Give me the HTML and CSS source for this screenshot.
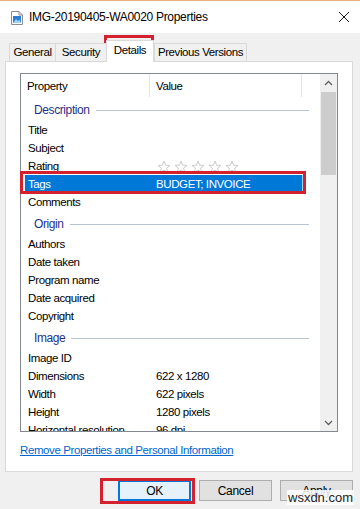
FILE: index.html
```html
<!DOCTYPE html>
<html lang="en">
<head>
    <meta charset="UTF-8">
    <meta name="viewport" content="width=device-width, initial-scale=1.0">
    <title>IMG-20190405-WA0020 Properties</title>
    <link rel="stylesheet" href="styles.css">
</head>
<body>
    <div class="window">
        <div class="titlebar">
            <svg class="file-icon" width="12" height="14" viewBox="0 0 12 14">
                <path d="M0.5 0.5 H8 L11.5 4 V13.5 H0.5 Z" fill="#fff" stroke="#8c8c8c"/>
                <path d="M8 0.5 V4 H11.5" fill="none" stroke="#8c8c8c"/>
                <rect x="2" y="5" width="8" height="7" fill="#2b7cd3"/>
                <path d="M2 12 L5 8 L7 10 L8.5 8.5 L10 12 Z" fill="#9fd0f5"/>
            </svg>
            <span class="title">IMG-20190405-WA0020 Properties</span>
            <svg class="close" width="12" height="12" viewBox="0 0 12 12">
                <path d="M1 1 L11 11 M11 1 L1 11" stroke="#1a1a1a" stroke-width="1"/>
            </svg>
        </div>

        <div class="tabs">
            <div class="tab tab-general">General</div>
            <div class="tab tab-security">Security</div>
            <div class="tab tab-details active">Details</div>
            <div class="tab tab-prev">Previous Versions</div>
        </div>

        <div class="panel">
            <div class="list">
                <div class="list-body">
                    <div class="header-row">
                        <span class="hcol hcol-prop">Property</span>
                        <span class="hcol hcol-val">Value</span>
                        <span class="hcol hcol-rest"></span>
                    </div>

                    <div class="group"><span>Description</span></div>
                    <div class="row"><span>Title</span><span></span></div>
                    <div class="row"><span>Subject</span><span></span></div>
                    <div class="row">
                        <span>Rating</span>
                        <span class="stars">
                            <svg width="14" height="14" viewBox="0 0 14 14"><path d="M7 1 L8.6 5.2 L13 5.4 L9.6 8.2 L10.8 12.6 L7 10.1 L3.2 12.6 L4.4 8.2 L1 5.4 L5.4 5.2 Z" fill="none" stroke="#cbcbcb"/></svg>
                            <svg width="14" height="14" viewBox="0 0 14 14"><path d="M7 1 L8.6 5.2 L13 5.4 L9.6 8.2 L10.8 12.6 L7 10.1 L3.2 12.6 L4.4 8.2 L1 5.4 L5.4 5.2 Z" fill="none" stroke="#cbcbcb"/></svg>
                            <svg width="14" height="14" viewBox="0 0 14 14"><path d="M7 1 L8.6 5.2 L13 5.4 L9.6 8.2 L10.8 12.6 L7 10.1 L3.2 12.6 L4.4 8.2 L1 5.4 L5.4 5.2 Z" fill="none" stroke="#cbcbcb"/></svg>
                            <svg width="14" height="14" viewBox="0 0 14 14"><path d="M7 1 L8.6 5.2 L13 5.4 L9.6 8.2 L10.8 12.6 L7 10.1 L3.2 12.6 L4.4 8.2 L1 5.4 L5.4 5.2 Z" fill="none" stroke="#cbcbcb"/></svg>
                            <svg width="14" height="14" viewBox="0 0 14 14"><path d="M7 1 L8.6 5.2 L13 5.4 L9.6 8.2 L10.8 12.6 L7 10.1 L3.2 12.6 L4.4 8.2 L1 5.4 L5.4 5.2 Z" fill="none" stroke="#cbcbcb"/></svg>
                        </span>
                    </div>
                    <div class="row selected"><span>Tags</span><span>BUDGET; INVOICE</span></div>
                    <div class="row"><span>Comments</span><span></span></div>

                    <div class="group"><span>Origin</span></div>
                    <div class="row"><span>Authors</span><span></span></div>
                    <div class="row"><span>Date taken</span><span></span></div>
                    <div class="row"><span>Program name</span><span></span></div>
                    <div class="row"><span>Date acquired</span><span></span></div>
                    <div class="row"><span>Copyright</span><span></span></div>

                    <div class="group"><span>Image</span></div>
                    <div class="row"><span>Image ID</span><span></span></div>
                    <div class="row"><span>Dimensions</span><span>622 x 1280</span></div>
                    <div class="row"><span>Width</span><span>622 pixels</span></div>
                    <div class="row"><span>Height</span><span>1280 pixels</span></div>
                    <div class="row"><span>Horizontal resolution</span><span>96 dpi</span></div>
                </div>
                <div class="scrollbar">
                    <div class="arrow">
                        <svg width="9" height="6" viewBox="0 0 9 6"><path d="M1 5 L4.5 1.5 L8 5" fill="none" stroke="#606060" stroke-width="1.3"/></svg>
                    </div>
                    <div class="track">
                        <div class="thumb"></div>
                    </div>
                    <div class="arrow">
                        <svg width="9" height="6" viewBox="0 0 9 6"><path d="M1 1 L4.5 4.5 L8 1" fill="none" stroke="#606060" stroke-width="1.3"/></svg>
                    </div>
                </div>
            </div>
            <a class="remove-link" href="#">Remove Properties and Personal Information</a>
        </div>

        <div class="buttons">
            <button class="btn btn-default">OK</button>
            <button class="btn">Cancel</button>
            <button class="btn">Apply</button>
        </div>

        <!-- red annotation boxes -->
        <div class="mark mark-tab"></div>
        <div class="mark mark-tags"></div>
        <div class="mark mark-ok"></div>
        <span class="watermark">wsxdn.com</span>
    </div>
</body>
</html>
```

FILE: styles.css
```css
html, body {
    margin: 0;
    padding: 0;
}
body {
    font-family: "Liberation Sans", Arial, sans-serif;
    font-size: 11.5px;
    letter-spacing: -0.4px;
    color: #000;
    background: #f0f0f0;
}
.window {
    position: relative;
    width: 360px;
    height: 509px;
    overflow: hidden;
    background: #f0f0f0;
}
.titlebar {
    height: 32px;
    border-top: 1px solid #e9b27a;
    background: #fff;
    display: flex;
    align-items: center;
    padding-left: 11px;
}
.file-icon {
    margin-top: 1px;
}
.title {
    margin-left: 6px;
    font-size: 12px;
    letter-spacing: -0.3px;
    color: #000;
}
.close {
    margin-left: auto;
    margin-right: 10px;
}
.tabs {
    position: relative;
    z-index: 1;
    display: flex;
    align-items: flex-end;
    height: 19px;
    margin-top: 9px;
    padding-left: 9px;
}
.tab {
    height: 17px;
    line-height: 17px;
    border: 1px solid #d9d9d9;
    border-bottom: none;
    margin-right: -1px;
    text-align: center;
    white-space: nowrap;
    background: #f0f0f0;
}
.tab-general { width: 45px; }
.tab-security { width: 50px; }
.tab-details { width: 46px; }
.tab-prev { width: 91px; }
.tab.active {
    height: 21px;
    line-height: 19px;
    background: #fff;
    margin-bottom: -1px;
    margin-right: 0;
    position: relative;
}
.panel {
    height: 398px;
    margin: 0 7px 0 5px;
    border: 1px solid #d9d9d9;
    background: #fff;
    padding: 11px 14px 0 14px;
}
.list {
    display: flex;
    height: 357px;
    border: 1px solid #828790;
    overflow: hidden;
}
.list-body {
    flex: 1;
    overflow: hidden;
}
.header-row {
    display: flex;
    height: 23px;
    line-height: 25px;
}
.hcol {
    padding-left: 6px;
    border-right: 1px solid #e5e5e5;
}
.hcol-prop { width: 122px; }
.hcol-val { width: 145px; }
.hcol-rest { flex: 1; border-right: none; }
.group {
    display: flex;
    align-items: center;
    box-sizing: border-box;
    height: 24px;
    padding-top: 2px;
    padding-left: 13px;
    width: 288px;
    color: #1e3287;
    font-size: 12px;
}
.group::after {
    content: "";
    flex: 1;
    height: 1px;
    margin-left: 6px;
    background: #b7c4cf;
}
.row {
    display: grid;
    grid-template-columns: 125px 1fr;
    width: 278px;
    height: 18px;
    line-height: 19px;
    margin-left: 4px;
    white-space: nowrap;
}
.row span:first-child {
    padding-left: 3px;
}
.row span:last-child {
    padding-left: 6px;
}
.row.selected {
    background: #0078d7;
    color: #fff;
    box-shadow: inset -1px 0 0 #9fd0ff;
}
.stars {
    display: flex;
    align-items: center;
    gap: 3px;
    padding-left: 7px !important;
}
.stars svg {
    display: block;
}
.scrollbar {
    width: 17px;
    display: flex;
    flex-direction: column;
    background: #f0f0f0;
}
.arrow {
    height: 17px;
    display: flex;
    align-items: center;
    justify-content: center;
}
.track {
    flex: 1;
    padding: 1px 1px;
}
.thumb {
    height: 83px;
    background: #cdcdcd;
}
.remove-link {
    display: block;
    margin-top: 12px;
    color: #0066cc;
    text-decoration: underline;
}
.buttons {
    display: flex;
    justify-content: flex-end;
    gap: 8px;
    margin-top: 8px;
    padding-right: 7px;
}
.btn {
    width: 73px;
    height: 21px;
    font-family: "Liberation Sans", Arial, sans-serif;
    font-size: 12px;
    letter-spacing: -0.3px;
    background: #e1e1e1;
    border: 1px solid #adadad;
    padding: 0;
    color: #000;
}
.btn-default {
    background: #e5f1fb;
    border: 2px solid #0078d7;
}
.mark {
    position: absolute;
    border: 3px solid #d3222e;
    pointer-events: none;
}
.mark-tab {
    left: 104px;
    top: 35px;
    width: 44px;
    height: 20px;
}
.mark-tags {
    left: 20px;
    top: 171px;
    width: 280px;
    height: 17px;
}
.mark-ok {
    left: 100px;
    top: 478px;
    width: 89px;
    height: 20px;
}
.watermark {
    position: absolute;
    left: 287px;
    top: 490px;
    font-family: "Liberation Sans", Arial, sans-serif;
    font-size: 13px;
    letter-spacing: 0;
    color: #222;
    background: rgba(255, 255, 255, 0.85);
    padding: 0 1px;
    line-height: 15px;
}
```
